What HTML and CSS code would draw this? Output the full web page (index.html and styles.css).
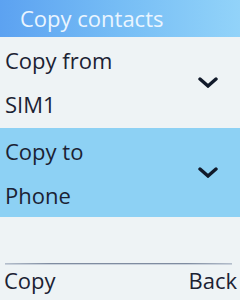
FILE: index.html
```html
<!DOCTYPE html>
<html>
<head>
<meta charset="utf-8">
<link rel="stylesheet" href="styles.css">
</head>
<body>
<div class="screen">
  <div class="header">Copy contacts</div>
  <div class="row first">
    <div class="texts">
      <div class="line">Copy from</div>
      <div class="line">SIM1</div>
    </div>
    <svg class="chev" width="20" height="11" viewBox="0 0 20 11"><path d="M2 2 L10 9 L18 2" fill="none" stroke="#111a2a" stroke-width="3.4" stroke-linecap="round" stroke-linejoin="miter"/></svg>
  </div>
  <div class="row selected">
    <div class="texts">
      <div class="line">Copy to</div>
      <div class="line">Phone</div>
    </div>
    <svg class="chev" width="20" height="11" viewBox="0 0 20 11"><path d="M2 2 L10 9 L18 2" fill="none" stroke="#111a2a" stroke-width="3.4" stroke-linecap="round" stroke-linejoin="miter"/></svg>
  </div>
  <div class="spacer"></div>
  <div class="divider"></div>
  <div class="softkeys">
    <span>Copy</span>
    <span>Back</span>
  </div>
</div>
</body>
</html>
```
FILE: styles.css
```css
html, body {
  margin: 0;
  padding: 0;
}
body {
  width: 240px;
  height: 300px;
  overflow: hidden;
  background: #eef3f5;
  font-family: "Open Sans", "DejaVu Sans", sans-serif;
  font-size: 22px;
  color: #1b2233;
}
.screen {
  display: flex;
  flex-direction: column;
  height: 300px;
}
.header {
  height: 37px;
  line-height: 37px;
  padding-left: 20px;
  background: linear-gradient(90deg, #5ca2f1 0%, #76bdf5 50%, #92d3f9 100%);
  color: #eaf5ff;
  box-sizing: border-box;
}
.row {
  display: flex;
  align-items: center;
  justify-content: space-between;
  padding-left: 5px;
  padding-right: 22px;
  box-sizing: border-box;
}
.row.first {
  height: 91px;
}
.row.selected {
  height: 89px;
  background: #8dd1f4;
}
.texts {
  display: flex;
  flex-direction: column;
}
.line {
  line-height: 44px;
  height: 44px;
}
.first .texts {
  margin-top: -1px;
}
.selected .texts {
  margin-top: 1px;
}
.chev {
  display: block;
}
.spacer {
  height: 46px;
}
.divider {
  height: 1px;
  margin: 0 8px 0 5px;
  background: linear-gradient(90deg, #b5bfcc 0%, #7f8ca0 20%, #7f8ca0 80%, #b5bfcc 100%);
  box-shadow: 0 1px 0 #c9d1db;
}
.softkeys {
  display: flex;
  justify-content: space-between;
  line-height: 30px;
  padding: 1px 3px 0 4px;
}
```
